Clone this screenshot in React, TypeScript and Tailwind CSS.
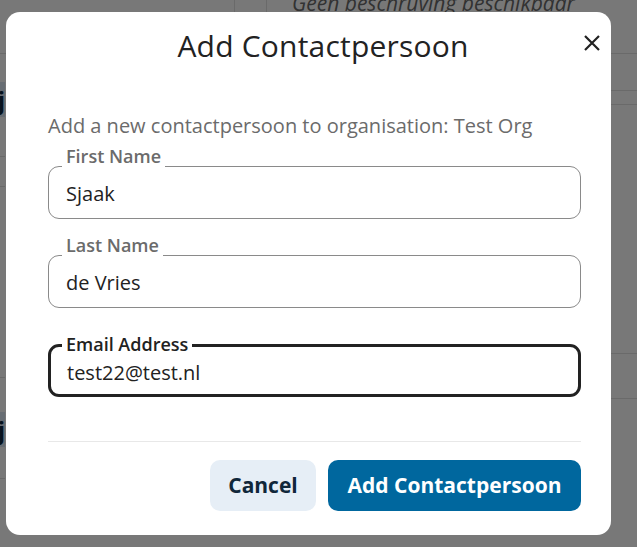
import React from 'react';

const Backdrop = () => {
  return (
    <div className="flex h-full flex-col">
      <div className="flex h-[54px] shrink-0 border-b border-[#e2e2e2]">
        <div className="w-[235px] border-r border-[#e2e2e2]" />
        <div className="w-[32px] border-r border-[#e2e2e2]" />
        <div className="flex-1 pl-[25px]">
          <p className="-mt-[11px] text-[21px] italic leading-[28px] text-[#6a6a6a]">
            Geen beschruving beschikbaar
          </p>
        </div>
      </div>
      <div className="flex flex-1">
        <div className="flex w-[5px] flex-col">
          <div className="h-[28px]" />
          <div className="flex h-[35px] justify-end overflow-hidden bg-[#dce8f4]">
            <span className="text-[24px] font-bold leading-[35px] text-[#0f2a40]">Bij</span>
          </div>
          <div className="h-[40px] border-b border-[#e2e2e2]" />
          <div className="h-[30px] border-b border-[#e2e2e2]" />
          <div className="h-[191px] border-b border-[#e2e2e2]" />
          <div className="h-[34px]" />
          <div className="flex h-[35px] justify-end overflow-hidden bg-[#dce8f4]">
            <span className="text-[24px] font-bold leading-[35px] text-[#0f2a40]">Bij</span>
          </div>
          <div className="h-[32px] border-b border-[#e2e2e2]" />
        </div>
        <div className="flex-1" />
        <div className="flex w-[26px] flex-col">
          <div className="h-[37px] border-b border-[#e2e2e2]" />
          <div className="h-[14px] border-b border-[#e2e2e2]" />
          <div className="h-[249px] border-b border-[#e2e2e2]" />
          <div className="h-[45px] border-b border-[#e2e2e2]" />
        </div>
      </div>
    </div>
  );
};

const Field = ({
  label,
  value,
  focused,
}: {
  label: string;
  value: string;
  focused?: boolean;
}) => {
  return (
    <div className="flex flex-col">
      <span
        className={`relative z-10 ml-[14px] w-fit bg-white px-[4px] text-[18px] font-semibold leading-[24px] ${
          focused ? 'text-[#222]' : 'text-[#6b6b6b]'
        }`}
      >
        {label}
      </span>
      {focused ? (
        <div className="-mt-[12px] flex h-[53px] items-center rounded-[11px] border-[3px] border-[#222] pt-[4px] pr-[15px] pl-[16px] text-[20px] leading-[28px] text-[#222]">
          {value}
        </div>
      ) : (
        <div className="-mt-[2px] flex h-[53px] items-center rounded-[11px] border border-[#8a8a8a] pt-[2px] pr-[17px] pl-[17px] text-[20px] leading-[28px] text-[#222]">
          {value}
        </div>
      )}
    </div>
  );
};

const Dialog = () => {
  return (
    <div className="flex w-[605px] flex-col rounded-[14px] bg-white pt-[14px] pr-[30px] pb-[24px] pl-[42px]">
      <div className="flex items-start">
        <h2 className="flex-1 pl-[15px] text-center text-[30px] leading-[40px] tracking-[0.2px] text-[#222]">
          Add Contactpersoon
        </h2>
        <button className="-mr-[20px] mt-[8px] h-[18px] w-[18px]">
          <svg viewBox="0 0 18 18" className="h-[18px] w-[18px]">
            <path d="M2 2 L16 16 M16 2 L2 16" stroke="#222" strokeWidth="2.2" fill="none" />
          </svg>
        </button>
      </div>

      <p className="mt-[46px] text-[20px] leading-[28px] text-[#6b6b6b]">
        Add a new contactpersoon to organisation: Test Org
      </p>

      <div className="mt-[4px]">
        <Field label="First Name" value="Sjaak" />
      </div>
      <div className="mt-[14px]">
        <Field label="Last Name" value="de Vries" />
      </div>
      <div className="mt-[24px]">
        <Field label="Email Address" value="test22@test.nl" focused />
      </div>

      <div className="mt-[44px] h-px bg-[#e8e8e8]" />

      <div className="mt-[18px] flex justify-end gap-x-[12px]">
        <button className="h-[51px] w-[106px] rounded-[10px] bg-[#e6eef6] text-[21px] font-bold text-[#10273a]">
          Cancel
        </button>
        <button className="h-[51px] w-[253px] rounded-[10px] bg-[#00679e] text-[21px] font-bold text-white">
          Add Contactpersoon
        </button>
      </div>
    </div>
  );
};

const App = () => {
  return (
    <div className="relative h-[547px] w-[637px] overflow-hidden bg-white font-['Open_Sans',sans-serif]">
      <Backdrop />
      <div className="absolute inset-0 flex items-start bg-black/[0.53] pt-[12px] pl-[6px]">
        <Dialog />
      </div>
    </div>
  );
};

export default App;
